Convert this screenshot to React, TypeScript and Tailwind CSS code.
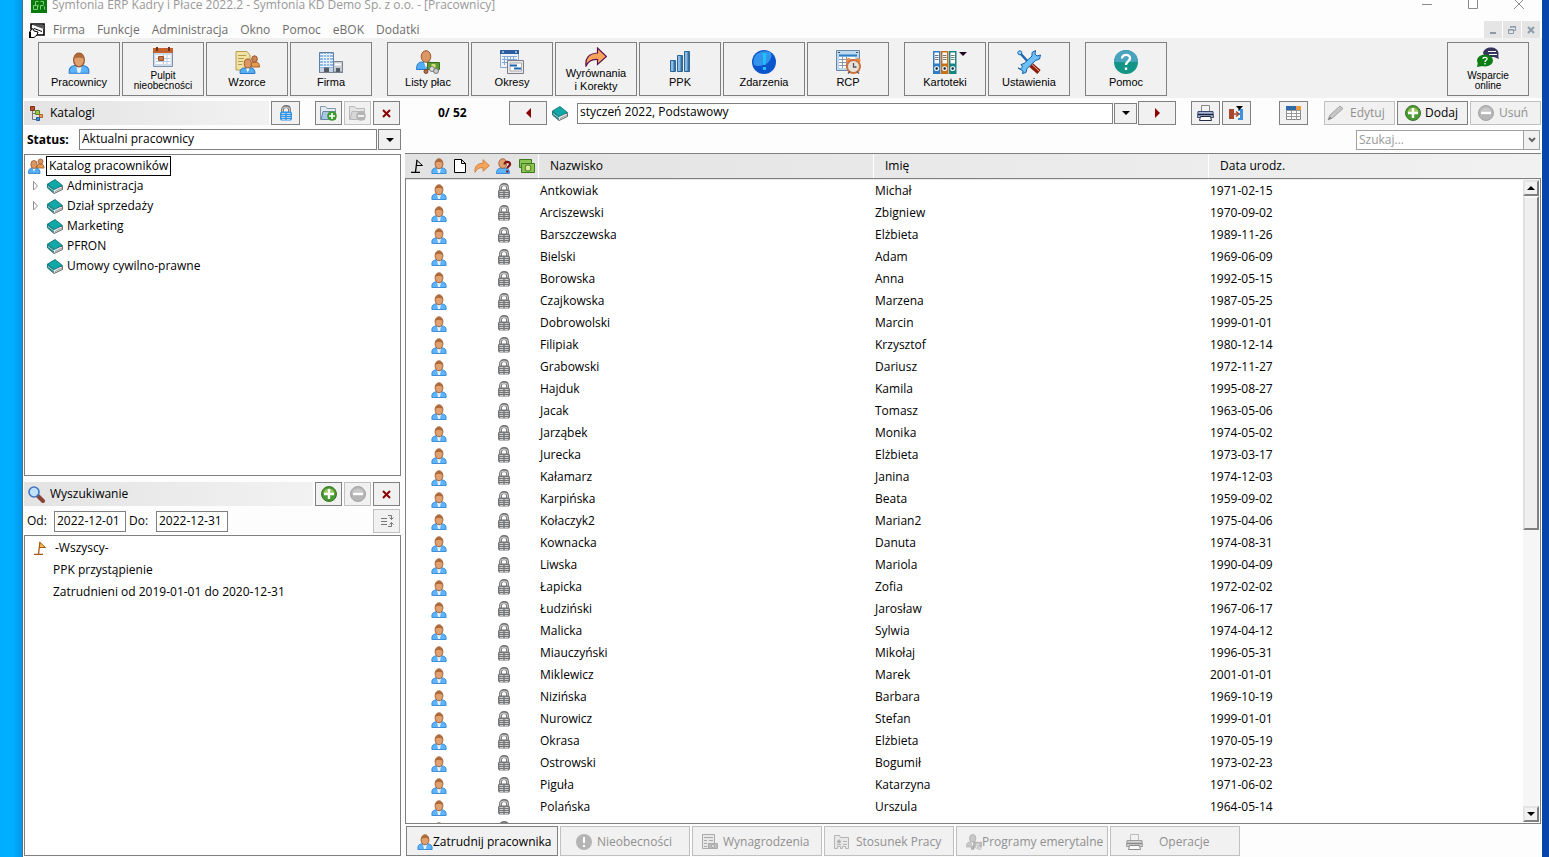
import type { ReactNode } from 'react';

const employees = [
  ['Antkowiak', 'Michał', '1971-02-15'],
  ['Arciszewski', 'Zbigniew', '1970-09-02'],
  ['Barszczewska', 'Elżbieta', '1989-11-26'],
  ['Bielski', 'Adam', '1969-06-09'],
  ['Borowska', 'Anna', '1992-05-15'],
  ['Czajkowska', 'Marzena', '1987-05-25'],
  ['Dobrowolski', 'Marcin', '1999-01-01'],
  ['Filipiak', 'Krzysztof', '1980-12-14'],
  ['Grabowski', 'Dariusz', '1972-11-27'],
  ['Hajduk', 'Kamila', '1995-08-27'],
  ['Jacak', 'Tomasz', '1963-05-06'],
  ['Jarząbek', 'Monika', '1974-05-02'],
  ['Jurecka', 'Elżbieta', '1973-03-17'],
  ['Kałamarz', 'Janina', '1974-12-03'],
  ['Karpińska', 'Beata', '1959-09-02'],
  ['Kołaczyk2', 'Marian2', '1975-04-06'],
  ['Kownacka', 'Danuta', '1974-08-31'],
  ['Liwska', 'Mariola', '1990-04-09'],
  ['Łapicka', 'Zofia', '1972-02-02'],
  ['Łudziński', 'Jarosław', '1967-06-17'],
  ['Malicka', 'Sylwia', '1974-04-12'],
  ['Miauczyński', 'Mikołaj', '1996-05-31'],
  ['Miklewicz', 'Marek', '2001-01-01'],
  ['Nizińska', 'Barbara', '1969-10-19'],
  ['Nurowicz', 'Stefan', '1999-01-01'],
  ['Okrasa', 'Elżbieta', '1970-05-19'],
  ['Ostrowski', 'Bogumił', '1973-02-23'],
  ['Piguła', 'Katarzyna', '1971-06-02'],
  ['Polańska', 'Urszula', '1964-05-14'],
  ['', '', ''],
];

const menu = ['Firma', 'Funkcje', 'Administracja', 'Okno', 'Pomoc', 'eBOK', 'Dodatki'];

const folders = [
  { name: 'Administracja', expandable: true },
  { name: 'Dział sprzedaży', expandable: true },
  { name: 'Marketing', expandable: false },
  { name: 'PFRON', expandable: false },
  { name: 'Umowy cywilno-prawne', expandable: false },
];

export default function App() {
  return (
    <div
      className="flex h-screen overflow-hidden bg-[#0845ab] pr-[7px] text-[12px] leading-4 text-black"
      style={{ fontFamily: '"Segoe UI", "Open Sans", "Noto Sans", sans-serif' }}
    >
      {/* DESKTOP EDGE */}
      <div className="w-[23px] shrink-0 bg-linear-to-r from-[#00aeff] from-60% to-[#0096e6] border-r border-[#4a7386]" />

      <div className="flex min-w-0 flex-1 flex-col bg-[#fdfdfd]">
        <TitleBar />
        <MenuBar />
        <Toolbar />
        <div className="flex min-h-0 flex-1 gap-1 pt-[3px]">
          <Sidebar />
          <main className="flex min-w-0 flex-1 flex-col">
            <PeriodBar />
            <EmployeeTable />
            <ActionBar />
          </main>
        </div>
      </div>
    </div>
  );
}

function TitleBar() {
  return (
    <header className="mb-2.5 flex h-2.5 shrink-0 items-center pl-2 text-[#999]">
      <AppLogo />
      <h1 className="ml-[5px] flex-1 whitespace-nowrap">
        Symfonia ERP Kadry i Płace 2022.2 - Symfonia KD Demo Sp. z o.o. - [Pracownicy]
      </h1>
      <div className="flex gap-[34px] pr-[17px]">
        <button aria-label="Minimalizuj">
          <svg width="12" height="12" stroke="#8a8a8a"><path d="M1 5.500h10" /></svg>
        </button>
        <button aria-label="Maksymalizuj">
          <svg width="12" height="12" fill="none" stroke="#8a8a8a"><path d="M1.500 .500h9v9h-9z" /></svg>
        </button>
        <button aria-label="Zamknij">
          <svg width="12" height="12" stroke="#8a8a8a"><path d="M1 0l10 10M11 0L1 10" /></svg>
        </button>
      </div>
    </header>
  );
}

function MenuBar() {
  return (
    <nav className="flex h-[18px] shrink-0 items-end pl-1.5 pr-0.5 text-[#6d6d6d]">
      <DocumentIcon />
      <div className="ml-2 flex flex-1 gap-3">
        {menu.map((item) => (
          <button key={item}>{item}</button>
        ))}
      </div>
      <div className="flex gap-px">
        <button aria-label="Minimalizuj okno" className="grid h-[17px] w-[18px] place-items-center bg-[#e5e5e5]">
          <svg width="10" height="10" stroke="#8c9baa" strokeWidth="2"><path d="M2 8h6" /></svg>
        </button>
        <button aria-label="Przywróć okno" className="grid h-[17px] w-[18px] place-items-center bg-[#e5e5e5]">
          <svg width="10" height="10" fill="none" stroke="#8c9baa"><path d="M1.500 4.500h5v4h-5zM1 5h6M3.500 3V1.500h5v4H7M3 2h6" /></svg>
        </button>
        <button aria-label="Zamknij okno" className="grid h-[17px] w-[18px] place-items-center bg-[#e5e5e5]">
          <svg width="10" height="10" stroke="#8c9baa" strokeWidth="2"><path d="M2 2l6 6M8 2L2 8" /></svg>
        </button>
      </div>
    </nav>
  );
}

/* TOOLBAR */

function Toolbar() {
  return (
    <div
      className="flex h-[60px] shrink-0 gap-[15px] bg-[#f1f1f1] pt-1 pl-[15px] pr-[13px]"
      style={{ fontFamily: '"Liberation Sans", Arial, sans-serif' }}
    >
      <div className="flex gap-0.5">
        <ToolButton icon={<PersonIcon size={22} />}>Pracownicy</ToolButton>
        <ToolButton icon={<CalendarIcon />} lines="tight">Pulpit<br />nieobecności</ToolButton>
        <ToolButton icon={<TemplatesIcon />}>Wzorce</ToolButton>
        <ToolButton icon={<CompanyIcon />}>Firma</ToolButton>
      </div>
      <div className="flex gap-0.5">
        <ToolButton icon={<PayrollIcon />}>Listy płac</ToolButton>
        <ToolButton icon={<PeriodsIcon />}>Okresy</ToolButton>
        <ToolButton icon={<ArrowIcon width={22} height={20} stroke="#5c1050" />} lines="loose">Wyrównania<br />i Korekty</ToolButton>
        <ToolButton icon={<BarsIcon />}>PPK</ToolButton>
        <ToolButton icon={<EventsIcon />}>Zdarzenia</ToolButton>
        <ToolButton icon={<TimeIcon />}>RCP</ToolButton>
      </div>
      <div className="flex gap-0.5">
        <ToolButton icon={<BindersIcon />}>Kartoteki</ToolButton>
        <ToolButton icon={<ToolsIcon />}>Ustawienia</ToolButton>
      </div>
      <ToolButton icon={<HelpIcon />}>Pomoc</ToolButton>
      <div className="ml-auto flex">
        <ToolButton icon={<SupportIcon />} lines="tight">Wsparcie<br />online</ToolButton>
      </div>
    </div>
  );
}

function ToolButton({
  icon,
  lines = 'single',
  children,
}: {
  icon: ReactNode;
  lines?: 'single' | 'tight' | 'loose';
  children: ReactNode;
}) {
  const labelStyles = {
    single: 'text-[11px] leading-4 mb-[5px]',
    tight: 'text-[10px] leading-[10px] mt-1 mb-1',
    loose: 'text-[11px] leading-[13px] mb-0.5',
  };

  return (
    <button className="flex h-[54px] w-[82px] shrink-0 flex-col items-center justify-end border border-[#808080]">
      {icon}
      <span className={labelStyles[lines]}>{children}</span>
    </button>
  );
}

/* SIDEBAR */

function Sidebar() {
  return (
    <aside className="flex w-[378px] shrink-0 flex-col pl-px">
      <section className="flex h-[375px] flex-col">
        <div className="flex h-6 gap-0.5 pr-px">
          <h2 className="flex flex-1 items-center gap-1.5 bg-linear-to-r from-[#e3e3e3] to-[#f2f2f2] pl-1.5">
            <TreeIcon />
            Katalogi
          </h2>
          <SmallButton label="Zablokuj" wide><LockIcon color="#2f96ea" /></SmallButton>
          <div className="w-[11px]" />
          <SmallButton label="Dodaj katalog"><FolderIcon sign="plus" /></SmallButton>
          <SmallButton label="Usuń katalog" disabled><FolderIcon sign="minus" /></SmallButton>
          <SmallButton label="Zamknij katalogi"><CrossIcon /></SmallButton>
        </div>
        <div className="flex items-center py-1">
          <label htmlFor="status" className="w-[55px] pl-[3px] font-bold">Status:</label>
          <select id="status" className="h-[21px] min-w-0 flex-1 appearance-none border border-[#808080] bg-white px-0.5 pb-0.5">
            <option>Aktualni pracownicy</option>
          </select>
          <DropArrow />
        </div>
        <div className="min-h-0 flex-1 border border-[#808080] bg-white pt-px">
          <div className="flex items-center gap-px pl-[3px]">
            <CrowdIcon />
            <span className="border border-black bg-white px-0.5 leading-[18px]">Katalog pracowników</span>
          </div>
          {folders.map((folder) => (
            <div key={folder.name} className="flex h-5 items-center gap-1 pl-[7px]">
              <svg width="11" height="10" fill="none" stroke="#909090">
                {folder.expandable && <path d="M1.500 .500v8.500L5.500 5z" />}
              </svg>
              <BookIcon />
              <span>{folder.name}</span>
            </div>
          ))}
        </div>
      </section>

      <section className="mt-1.5 flex min-h-0 flex-1 flex-col pb-px">
        <div className="flex h-6 shrink-0 gap-0.5 pr-px">
          <h2 className="flex flex-1 items-center gap-[5px] bg-linear-to-r from-[#e3e3e3] to-[#f2f2f2] pl-1">
            <SearchIcon />
            Wyszukiwanie
          </h2>
          <SmallButton label="Dodaj wyszukiwanie"><SignIcon sign="plus" /></SmallButton>
          <SmallButton label="Usuń wyszukiwanie" disabled><SignIcon sign="minus" /></SmallButton>
          <SmallButton label="Zamknij wyszukiwanie"><CrossIcon /></SmallButton>
        </div>
        <div className="mt-[3px] mb-0.5 flex h-6 shrink-0 items-center pr-px">
          <label htmlFor="from" className="w-[30px] pl-[3px]">Od:</label>
          <input id="from" defaultValue="2022-12-01" className="h-[21px] w-[72px] border border-[#808080] bg-white px-0.5 pb-0.5" />
          <label htmlFor="to" className="w-[30px] pl-[3px]">Do:</label>
          <input id="to" defaultValue="2022-12-31" className="h-[21px] w-[72px] border border-[#808080] bg-white px-0.5 pb-0.5" />
          <div className="ml-auto flex h-6">
            <SmallButton label="Filtruj" disabled>
              <svg width="14" height="14" fill="none" stroke="#777">
                <path d="M1 4.500h6M1 7.500h6M1 10.500h6M8 1.500h3.500v4M9.500 3.500l2 2 2-2M8 12.500h3.500v-4M9.500 10.500l2-2 2 2" />
              </svg>
            </SmallButton>
          </div>
        </div>
        <ul className="min-h-0 flex-1 border border-[#808080] bg-white pt-px">
          <li className="flex h-[22px] items-center gap-2 pl-2"><FlagIcon color="#a85a10" fill="#ffc060" />-Wszyscy-</li>
          <li className="flex h-[22px] items-center pl-7">PPK przystąpienie</li>
          <li className="flex h-[22px] items-center pl-7">Zatrudnieni od 2019-01-01 do 2020-12-31</li>
        </ul>
      </section>
    </aside>
  );
}

function SmallButton({
  label,
  wide = false,
  disabled = false,
  children,
}: {
  label: string;
  wide?: boolean;
  disabled?: boolean;
  children: ReactNode;
}) {
  return (
    <button
      aria-label={label}
      disabled={disabled}
      className={`grid h-6 shrink-0 place-items-center border bg-[#f1f1f1] ${wide ? 'w-[29px]' : 'w-[27px]'} ${
        disabled ? 'border-[#c0c0c0]' : 'border-[#808080]'
      }`}
    >
      {children}
    </button>
  );
}

function DropArrow() {
  return (
    <span className="ml-px grid h-[21px] w-[23px] shrink-0 place-items-center border border-[#808080] bg-[#f1f1f1]">
      <svg width="8" height="4"><path d="M0 0h8L4 4z" /></svg>
    </span>
  );
}

/* PERIOD BAR */

function PeriodBar() {
  return (
    <div>
      <div className="flex h-6 items-center pr-px">
        <span className="w-[104px] pl-[33px] font-bold">0/ 52</span>
        <button aria-label="Poprzedni okres" className="grid h-6 w-[38px] place-items-center border border-[#808080] bg-[#f1f1f1]">
          <svg width="5" height="10" fill="#8b0000"><path d="M5 0v10L0 5z" /></svg>
        </button>
        <span className="mx-[5px]"><BookIcon /></span>
        <select aria-label="Okres" className="ml-1 h-[21px] min-w-0 flex-1 appearance-none border border-[#808080] bg-white px-0.5 pb-0.5">
          <option>styczeń 2022, Podstawowy</option>
        </select>
        <DropArrow />
        <button aria-label="Następny okres" className="ml-px grid h-6 w-[38px] place-items-center border border-[#808080] bg-[#f1f1f1]">
          <svg width="5" height="10" fill="#8b0000"><path d="M0 0v10l5-5z" /></svg>
        </button>
        <div className="ml-[15px] flex gap-0.5">
          <SmallButton label="Drukuj" wide><PrinterIcon /></SmallButton>
          <SmallButton label="Eksport" wide><ExportIcon /></SmallButton>
        </div>
        <div className="ml-7 flex">
          <SmallButton label="Kolumny" wide><GridIcon /></SmallButton>
        </div>
        <div className="ml-4 flex gap-0.5">
          <button disabled className="flex h-6 w-[71px] items-center gap-1.5 border border-[#c0c0c0] bg-[#f1f1f1] pl-0.5 text-[#909090]">
            <PencilIcon />Edytuj
          </button>
          <button className="flex h-6 w-[71px] items-center gap-1 border border-[#808080] bg-[#f1f1f1] pl-[7px]">
            <SignIcon sign="plus" />Dodaj
          </button>
          <button disabled className="flex h-6 w-[71px] items-center gap-[5px] border border-[#c0c0c0] bg-[#f1f1f1] pl-[7px] text-[#909090]">
            <SignIcon sign="minus" />Usuń
          </button>
        </div>
      </div>
      <div className="mt-[5px] mb-[3px] flex h-5 justify-end pr-0.5">
        <input aria-label="Szukaj" placeholder="Szukaj..." className="w-[168px] border border-[#a0a0a0] bg-white px-0.5 placeholder:text-[#999]" />
        <button aria-label="Rozwiń" className="grid w-4 place-items-center border border-l-0 border-[#a0a0a0] bg-[#f1f1f1]">
          <svg width="8" height="6" fill="none" stroke="#666" strokeWidth="2"><path d="M1 1l3 3 3-3" /></svg>
        </button>
      </div>
    </div>
  );
}

/* EMPLOYEE TABLE */

function EmployeeTable() {
  return (
    <div className="relative mr-px min-h-0 flex-1 overflow-hidden border-t border-[#808080] bg-white">
      <table className="w-full table-fixed border-separate border-spacing-0 text-left">
        <colgroup>
          <col className="w-[23px]" />
          <col className="w-[22px]" />
          <col className="w-[20px]" />
          <col className="w-[23px]" />
          <col className="w-[22px]" />
          <col className="w-[23px]" />
          <col className="w-[335px]" />
          <col className="w-[335px]" />
          <col />
        </colgroup>
        <thead className="bg-linear-to-r from-[#e2e2e2] to-[#f1f1f1]">
          <tr className="h-[26px]">
            <HeadIcon label="Znacznik"><FlagIcon color="#000" fill="none" /></HeadIcon>
            <HeadIcon label="Pracownik"><PersonIcon size={16} /></HeadIcon>
            <HeadIcon label="Dokument">
              <svg width="12" height="14" fill="#fff" stroke="#000"><path d="M.500.500h7l4 4v9H.500zM7.500.500v4h4" /></svg>
            </HeadIcon>
            <HeadIcon label="Korekta"><ArrowIcon width={16} height={14} stroke="#c87830" /></HeadIcon>
            <HeadIcon label="Status"><QuestionPersonIcon /></HeadIcon>
            <HeadIcon label="Płace"><MoneyIcon /></HeadIcon>
            <HeadText>Nazwisko</HeadText>
            <HeadText>Imię</HeadText>
            <HeadText>Data urodz.</HeadText>
          </tr>
        </thead>
        <tbody>
          {employees.map(([surname, name, born], i) => (
            <tr key={i} className="h-[22px]">
              <td />
              <td className="p-0"><div className="flex justify-center pt-px"><PersonIcon size={16} /></div></td>
              <td />
              <td />
              <td className="p-0"><div className="flex justify-center"><LockIcon color="#777" /></div></td>
              <td />
              <td className="p-0 pl-0.5">{surname}</td>
              <td className="p-0 pl-0.5">{name}</td>
              <td className="p-0 pl-0.5">{born}</td>
            </tr>
          ))}
        </tbody>
      </table>

      {/* Frame and scroll bar over the rows */}
      <div className="pointer-events-none absolute inset-x-0 top-6 bottom-0 flex justify-end border border-[#808080] p-px">
        <div className="flex w-4 flex-col bg-[#f6f6f6]">
          <ScrollButton><path d="M0 4h8L4 0z" /></ScrollButton>
          <div className="h-[334px] border-2 border-t-[#f8f8f8] border-r-[#808080] border-b-[#808080] border-l-[#e0e0e0] bg-[#efefef]" />
          <div className="flex-1" />
          <ScrollButton><path d="M0 0h8L4 4z" /></ScrollButton>
        </div>
      </div>
    </div>
  );
}

function HeadIcon({ label, children }: { label: string; children: ReactNode }) {
  return (
    <th aria-label={label} className="p-0 pb-0.5">
      <div className="flex justify-center">{children}</div>
    </th>
  );
}

function HeadText({ children }: { children: ReactNode }) {
  return <th className="border-l border-white pb-0.5 pl-[11px] font-normal">{children}</th>;
}

function ScrollButton({ children }: { children: ReactNode }) {
  return (
    <div className="grid h-4 shrink-0 place-items-center border-2 border-t-[#e4e4e4] border-r-[#808080] border-b-[#808080] border-l-[#e4e4e4] bg-[#f1f1f1]">
      <svg width="8" height="4">{children}</svg>
    </div>
  );
}

/* BOTTOM ACTIONS */

function ActionBar() {
  const disabledStyle = 'flex h-[30px] items-center border border-[#c0c0c0] bg-[#f1f1f1] pt-0.5 text-[#909090] whitespace-nowrap';

  return (
    <div className="flex shrink-0 gap-0.5 pt-0.5 pb-px pl-px">
      <button className="flex h-[30px] w-[152px] items-center border border-[#808080] bg-[#f1f1f1] pt-0.5 pl-2.5 whitespace-nowrap">
        <PersonIcon size={16} />Zatrudnij pracownika
      </button>
      <button disabled className={`${disabledStyle} w-[130px] gap-[5px] pl-[15px]`}>
        <svg width="16" height="16"><circle cx="8" cy="8" r="8" fill="#b4b4b4" /><path d="M8 3v6M8 11v2" stroke="#fff" strokeWidth="2" /></svg>
        Nieobecności
      </button>
      <button disabled className={`${disabledStyle} w-[130px] gap-[5px] pl-[9px]`}>
        <svg width="16" height="16" fill="#e8e8e8" stroke="#aaa">
          <path d="M.500.500h12v14H.500zM2 3.500h9M2 6.500h3M7 6.500h4M2 9.500h3M2 12.500h3" />
          <path d="M6.500 9.500h9v5h-9z" fill="#bbb" /><circle cx="11" cy="12" r="1.500" fill="#eee" />
        </svg>
        Wynagrodzenia
      </button>
      <button disabled className={`${disabledStyle} w-[130px] gap-1.5 pl-[9px]`}>
        <svg width="16" height="16" fill="#e8e8e8" stroke="#b4b4b4">
          <path d="M.500 14.500v-13h5l1 2h8v11h-3v-2h-3v2h-2v-2h-3v2z" />
          <path d="M9 7.500h4M9 10.500h4M3 10.500h4" /><circle cx="5" cy="7.500" r="1.500" fill="#aaa" />
        </svg>
        Stosunek Pracy
      </button>
      <button disabled className={`${disabledStyle} w-[152px] pl-[9px]`}>
        <span className="grayscale opacity-50"><PayrollIcon size={16} /></span>
        Programy emerytalne
      </button>
      <button disabled className={`${disabledStyle} w-[130px] gap-4 pl-[15px]`}>
        <span className="grayscale opacity-50"><PrinterIcon /></span>
        Operacje
      </button>
    </div>
  );
}

/* ICONS */

function AppLogo() {
  return (
    <svg width="16" height="16" className="shrink-0">
      <path d="M0 0h16v16H0z" fill="#087a0c" />
      <path d="M2.500 12.500V8.500h4v4zM4.500 8V4.500h3M9.500 4.500h3v3M9.500 12.500v-4h3M13.500 12.500v-3" fill="none" stroke="#7fcf7c" />
      <path d="M2 2.500h3M11 2.500h3M7.500 7v3" stroke="#3aa53c" />
    </svg>
  );
}

function DocumentIcon() {
  return (
    <svg width="16" height="15" className="shrink-0">
      <path d="M2 1h13v11H8L2 6z" fill="#fff" stroke="#000" strokeWidth="1.600" />
      <path d="M4 2h11v4L9 4z" fill="#555" />
      <path d="M5 5.500l8 3" stroke="#000" />
      <path d="M1 14.500V8l3-2.500 1 2.500 4 1-1 3-3 2.500z" fill="#fff" stroke="#000" />
      <path d="M0 9h2v6H0z" />
    </svg>
  );
}

function PersonIcon({ size }: { size: number }) {
  return (
    <svg width={size} height={size} viewBox="0 0 16 16" className="shrink-0">
      <path d="M.900 15.500v-2.300c.300-2 1.600-3 4-3.400h6.200c2.400.400 3.700 1.400 4 3.400v2.300z" fill="#5cb4fa" stroke="#2b7cd0" strokeWidth=".8" />
      <path d="M6 10l1 5h2l1-5z" fill="#e8f4ff" />
      <ellipse cx="8" cy="5.800" rx="3.900" ry="5" fill="#e0a070" stroke="#97552c" strokeWidth=".9" />
      <path d="M4.300 5C4.300 2 6 1 8 1s3.700 1 3.700 4C10.500 3.800 5.500 3.800 4.300 5z" fill="#b06a38" />
    </svg>
  );
}

function CrowdIcon() {
  return (
    <svg width="17" height="16" viewBox="0 0 17 16" className="shrink-0">
      <path d="M9 10c0-3 1-4 3.500-4s3.500 1 3.500 4z" fill="#e59a4c" stroke="#a3602a" strokeWidth=".8" />
      <circle cx="12.500" cy="3.500" r="2.500" fill="#d99362" stroke="#97552c" strokeWidth=".8" />
      <path d="M.500 15.500c0-4 1-5 3-5.500h5c2.500.500 3.500 2 3.500 5.500z" fill="#52adf5" stroke="#2b78c8" strokeWidth=".8" />
      <path d="M4.500 10L6 14l1.500-4z" fill="#fff" />
      <ellipse cx="6" cy="6.500" rx="3.200" ry="4" fill="#dc9662" stroke="#97552c" strokeWidth=".8" />
    </svg>
  );
}

function QuestionPersonIcon() {
  return (
    <svg width="16" height="16" viewBox="0 0 16 16">
      <path d="M.500 15.500c0-3.500 1-5 4-5.500h5c3 .500 4 2 4 5.500z" fill="#5cb4fa" stroke="#2b7cd0" strokeWidth=".8" />
      <ellipse cx="6.800" cy="5.500" rx="4" ry="4.800" fill="#e0a070" stroke="#97552c" strokeWidth=".8" />
      <path d="M8.500 6.500c0-4 6-3 5.500 0-.300 1.800-2.500 1.800-2.700 4M11.300 12.500v2" fill="none" stroke="#7c1010" strokeWidth="2.200" />
    </svg>
  );
}

function CalendarIcon() {
  return (
    <svg width="20" height="20" viewBox="0 0 20 20">
      <path d="M.500 2h19v17.500H.500z" fill="#cfdcec" stroke="#7f93ad" />
      <path d="M0 1h20v5H0z" fill="#c2622e" />
      <path d="M4 0v4M16 0v4" stroke="#6e3114" strokeWidth="2" />
      <path d="M2.500 8h15v9h-15z" fill="#fff" />
      <path d="M3 11.500h14M3 14.500h14M10.500 8v9M14 8v9" stroke="#b9c8da" />
      <path d="M5.500 9.500h5v4h-5z" fill="#c87547" stroke="#9c4f24" />
    </svg>
  );
}

function TemplatesIcon() {
  return (
    <svg width="25" height="24" viewBox="0 0 25 24">
      <path d="M1 1.500h11l3 3.500v15H1z" fill="#f3e3a2" stroke="#b59c58" />
      <path d="M3 5.500h8M3 8.500h6M3 11.500h5M3 14.500h4" stroke="#b59c58" />
      <path d="M16 17c0-4 1-5 4-5s4.500 1 4.500 5z" fill="#e59a4c" stroke="#a3602a" />
      <ellipse cx="19.500" cy="9" rx="2.800" ry="3.200" fill="#cf8450" stroke="#97552c" />
      <path d="M5 23.500c0-4 1-5 4-5.500h7c3 .500 4 2 4 5.500z" fill="#52adf5" stroke="#2b78c8" />
      <path d="M11 18l1.800 4.500L14.500 18z" fill="#fff" />
      <ellipse cx="12.800" cy="13.500" rx="3.600" ry="4.500" fill="#dc9662" stroke="#97552c" />
    </svg>
  );
}

function CompanyIcon() {
  return (
    <svg width="24" height="22" viewBox="0 0 24 22">
      <path d="M14 9.500h9.500V20H14z" fill="#c9ccd4" stroke="#7d828f" />
      <path d="M16 12.500h6" stroke="#fff" strokeWidth="2" />
      <path d="M.500 .500h14V20H.500z" fill="#6fa3dc" stroke="#5f7fa6" />
      <path d="M1 2.500h13M1 5.500h13M1 8.500h13M1 11.500h13M1 14.500h13" stroke="#f2f7fd" strokeWidth="1.600" />
      <path d="M4.500 1v14M7.500 1v14M10.500 1v14" stroke="#dfeaf7" />
      <path d="M1 16h13v4H1z" fill="#c9d4e2" />
      <path d="M5 15.500h5V20H5zM17 16h4v4h-4z" fill="#555b66" />
      <path d="M0 20.500h24" stroke="#7d828f" />
    </svg>
  );
}

function PayrollIcon({ size = 24 }: { size?: number }) {
  return (
    <svg width={size} height={size} viewBox="0 0 24 24">
      <path d="M.500 19.500c0-5 1.500-7 5-7.500h8c3 .500 4 3 4 7.500z" fill="#52adf5" stroke="#2b78c8" />
      <path d="M8 12l2 6 2-6z" fill="#fff" />
      <ellipse cx="10" cy="6.500" rx="4.800" ry="5.800" fill="#dc9662" stroke="#97552c" />
      <path d="M11.500 12.500h12v7h-12z" fill="#5d9a34" stroke="#3d6e1c" />
      <circle cx="17.500" cy="16" r="2.300" fill="#d8e078" />
      <circle cx="10" cy="21.500" r="2" fill="#b86f48" stroke="#7c4324" />
      <circle cx="16" cy="19" r="2.500" fill="#ddd" stroke="#777" />
      <circle cx="20" cy="21" r="2.500" fill="#ccc" stroke="#777" />
    </svg>
  );
}

function PeriodsIcon() {
  return (
    <svg width="24" height="24" viewBox="0 0 24 24">
      <path d="M.500.500h18v17H.500z" fill="#eef3fa" stroke="#8ea6c8" />
      <path d="M0 0h19v4H0z" fill="#2c5c9e" />
      <path d="M3 1v2M16 1v2" stroke="#fff" />
      <path d="M2 6.500h15M2 9.500h15M2 12.500h15M4.500 6v9M7.500 6v9M10.500 6v9M13.500 6v9" stroke="#86a8d6" />
      <path d="M7.500 10.500h16v13h-16z" fill="#e9e9ec" stroke="#7c7c84" />
      <path d="M10 13h11.500v8H10z" fill="#fff" stroke="#aaa" />
      <path d="M10 15.500h7M14 18.500h7" stroke="#1d66b4" strokeWidth="2" />
    </svg>
  );
}

function ArrowIcon({ width, height, stroke }: { width: number; height: number; stroke: string }) {
  return (
    <svg width={width} height={height} viewBox="0 0 22 20" className="shrink-0">
      <path d="M1 19C0 11 4 6.500 12.500 6V1l9 8.500-9 8v-5C7 12 3.500 14 1 19z" fill="#f6a45c" stroke={stroke} strokeWidth="1.200" />
    </svg>
  );
}

function BarsIcon() {
  return (
    <svg width="20" height="24" viewBox="0 0 20 24" fill="#8dbbe6" stroke="#2a6597">
      <path d="M.500 10.500h5v11h-5zM7.500 5.500h5v16h-5zM14.500 1.500h5v20h-5z" />
      <path d="M4.500 11v10M11.500 6v15M18.500 2v19" stroke="#34719f" strokeWidth="2" />
    </svg>
  );
}

function EventsIcon() {
  return (
    <svg width="24" height="24" viewBox="0 0 24 24">
      <circle cx="12" cy="12" r="12" fill="#0a55cc" />
      <path d="M2 15C-1 5 9-1 18 2c3 3 1 9-4 12-5 2-9 3-12 1z" fill="#3493ea" />
      <path d="M10.500 3h4l-1 12h-2zM11 17h3v3h-3z" fill="#1fc0ff" />
    </svg>
  );
}

function TimeIcon() {
  return (
    <svg width="25" height="24" viewBox="0 0 25 24">
      <path d="M.500.500h23v20H.500z" fill="#bcd9ee" stroke="#6788a8" />
      <path d="M2 2.500h2M20 2.500h2" stroke="#456" />
      <path d="M3 5.500h18" stroke="#2c7cc0" strokeWidth="2" />
      <path d="M3 7h16v11H3z" fill="#fff" />
      <path d="M3 9.500h16M3 12.500h16M3 15.500h16M6.500 7v11M10.500 7v11" stroke="#8d99a6" />
      <circle cx="12.500" cy="10.500" r="2.500" fill="#e88b4b" /><circle cx="22" cy="10.500" r="2.500" fill="#e88b4b" />
      <circle cx="17.500" cy="16.500" r="6.500" fill="#e6e2dc" stroke="#d2713a" strokeWidth="2" />
      <path d="M17.500 13v4h3M12 23.500l2-2M23 23.500l-2-2" fill="none" stroke="#555" strokeWidth="1.300" />
    </svg>
  );
}

function BindersIcon() {
  const colors = ['#2f7dc4', '#c87018', '#1a8484'];
  return (
    <svg width="24" height="24" viewBox="0 0 24 24" className="overflow-visible">
      {colors.map((color, i) => (
        <g key={color} transform={`translate(${i * 8} 0)`}>
          <path d="M0 1h7.500v23H0z" fill={color} />
          <path d="M1.500 2.500h4.500v11H1.500z" fill="#fff" />
          <path d="M2 5.500h3.500M2 7.500h3.500M2 9.500h3.500" stroke="#777" />
          <circle cx="3.700" cy="18.500" r="2.600" fill="#e4eef4" />
          <circle cx="3.700" cy="18.500" r="1.200" fill="#123" />
        </g>
      ))}
      <path d="M26 2h8l-4 4z" fill="#200020" />
    </svg>
  );
}

function ToolsIcon() {
  return (
    <svg width="24" height="24" viewBox="0 0 24 24">
      <path d="M3 3l10 11" stroke="#1d66b4" strokeWidth="2.500" />
      <circle cx="2.800" cy="2.800" r="2" fill="#8fd0f8" stroke="#1d66b4" />
      <path d="M14 15l8 7" stroke="#8b1d0c" strokeWidth="5" />
      <path d="M15 14.500l7 6.500" stroke="#f0b8a4" />
      <path d="M1 18l2.500 1 2-2-1.500-2.500 3-1 8-7.500V2.500L18.500.500 18 4l2 2 3.500-1-1 4-4 1.500-8.500 8-1 4L5.500 23.500 6 21z" fill="#6cc0f5" stroke="#1a5ea8" />
    </svg>
  );
}

function HelpIcon() {
  return (
    <svg width="24" height="24" viewBox="0 0 24 24">
      <circle cx="12" cy="12" r="12" fill="#139484" />
      <path d="M0 12a12 12 0 0124 0z" fill="#4aa3bd" />
      <path d="M8 8.500c0-5 8.500-4.500 8 0-.300 3-4 2.800-4 6.500M12 17.500v2.500" fill="none" stroke="#fff" strokeWidth="2.300" />
    </svg>
  );
}

function SupportIcon() {
  return (
    <svg width="24" height="20" viewBox="0 0 24 20">
      <path d="M7 6C8-1.500 22-1.500 22.500 6c0 2-.500 3 .500 6l-5-2H9z" fill="#34345c" />
      <path d="M12 4.500h8M13 7.500h8" stroke="#fff" />
      <ellipse cx="9" cy="13.500" rx="8" ry="6" fill="#0a7d14" />
      <path d="M2 15l-1 5 6-1z" fill="#0a7d14" />
      <path d="M7 12c0-2.500 4.500-2 4 0-.300 1.300-2 1.200-2 3M9 16v1.500" fill="none" stroke="#fff" strokeWidth="1.300" />
    </svg>
  );
}

function TreeIcon() {
  return (
    <svg width="14" height="15" className="shrink-0">
      <path d="M2.500 5v8.500H9M2.500 7.500H6" fill="none" stroke="#777" />
      <path d="M.500.500h4v4h-4z" fill="#b5502c" stroke="#7c3010" />
      <path d="M5.500 4.500h4v4h-4z" fill="#9bc848" stroke="#5a8420" />
      <path d="M9.500 8.500h3v3h-3z" fill="#f2a04c" stroke="#b5602c" />
      <path d="M6.500 11.500h3v3h-3z" fill="#3d92dc" stroke="#1d5ca0" />
    </svg>
  );
}

function LockIcon({ color }: { color: string }) {
  return (
    <svg width="12" height="16" viewBox="0 0 12 16">
      <path d="M2.500 8V4.500C2.500.500 9.500.500 9.500 4.500V8" fill="none" stroke="#6c6c6c" strokeWidth="2.800" />
      <path d="M2.500 8V4.500c0-3.200 7-3.200 7 0V8" fill="none" stroke="#c4c4c4" strokeWidth="1.200" />
      <path d="M0 8l1-1.500h10L12 8v6l-1 1.500H1L0 14z" fill={color} />
      <path d="M1.500 8.500h9M1.500 10.500h9M1.500 12.500h9M2 14.500h8" stroke="#d2d8dc" strokeWidth=".9" />
      <path d="M6 7v8" stroke={color} strokeWidth="1.500" />
    </svg>
  );
}

function FolderIcon({ sign }: { sign: 'plus' | 'minus' }) {
  const active = sign === 'plus';
  return (
    <svg width="17" height="16" viewBox="0 0 17 16">
      <path d="M.500 14.500v-13h5l1.500 2h8.500v11z" fill={active ? '#e2ebf2' : '#e4e4e4'} stroke={active ? '#8199ac' : '#b8b8b8'} />
      <path d="M1 14.500l2-8h12.500v8z" fill={active ? '#a4c8e6' : '#d6d6d6'} stroke={active ? '#6686a2' : '#b8b8b8'} />
      <circle cx="12" cy="11" r="4.800" fill={active ? '#3f9a2c' : '#b4b4b4'} />
      <path d={active ? 'M12 8v6M9 11h6' : 'M9 11h6'} stroke="#fff" strokeWidth="1.600" />
    </svg>
  );
}

function SignIcon({ sign }: { sign: 'plus' | 'minus' }) {
  const active = sign === 'plus';
  return (
    <svg width="16" height="16" className="shrink-0">
      <circle cx="8" cy="8" r="7.500" fill={active ? '#4a9a34' : '#b6b6b6'} stroke={active ? '#3a7426' : '#a4a4a4'} />
      <path d="M2.500 8a5.500 5.500 0 0111 0z" fill={active ? '#9cc45e' : '#c8c8c8'} />
      <path d={active ? 'M8 3v10M3 8h10' : 'M3 8h10'} stroke="#fff" strokeWidth="2.400" />
    </svg>
  );
}

function CrossIcon() {
  return (
    <svg width="9" height="9" stroke="#8b0000" strokeWidth="2"><path d="M1 1l7 7M8 1L1 8" /></svg>
  );
}

function BookIcon() {
  return (
    <svg width="16" height="15" className="shrink-0">
      <path d="M.500 5.500V9L7 14.500l8.500-4V7.500z" fill="#ececec" stroke="#555" strokeWidth=".9" />
      <path d="M8 12.500l7-3.500" fill="none" stroke="#999" />
      <path d="M.500 5L8 .500l7.500 6L7 10.500z" fill="#12a8a8" stroke="#0b6a70" strokeWidth=".8" />
      <path d="M0 5l7 5.500v3.500L0 8.500z" fill="#0d8286" />
      <path d="M1 7.500l6 4.500" stroke="#d8e8e8" strokeWidth=".8" />
    </svg>
  );
}

function SearchIcon() {
  return (
    <svg width="17" height="17" className="shrink-0">
      <path d="M9.500 9.500l5.500 5.500" stroke="#8a4436" strokeWidth="4" strokeLinecap="round" />
      <circle cx="6" cy="6" r="5" fill="#bfe2fb" stroke="#4076c0" strokeWidth="1.600" />
    </svg>
  );
}

function FlagIcon({ color, fill }: { color: string; fill: string }) {
  return (
    <svg width="14" height="14" fill="none" stroke={color} className="shrink-0">
      <path d="M6.500 1l6 5.500H6" fill={fill} />
      <path d="M7 1L5.500 13M1 13.500h9" strokeWidth="1.300" />
    </svg>
  );
}

function PrinterIcon() {
  return (
    <svg width="17" height="16" viewBox="0 0 17 16">
      <path d="M4.500.500h8V7h-8z" fill="#f4f4f4" stroke="#888" />
      <path d="M1 6.500h15l.500 6H.500z" fill="#a9b8d8" stroke="#3c4a70" />
      <path d="M1 9.500h15" stroke="#1c2444" strokeWidth="1.500" />
      <path d="M3.500 11.500h10l1 4h-12z" fill="#fff" stroke="#222a48" />
    </svg>
  );
}

function ExportIcon() {
  return (
    <svg width="15" height="15">
      <path d="M0 3h5v10H0z" fill="#a8482c" />
      <path d="M5 8h4M7 5.500L10 8l-3 2.500" stroke="#a8482c" fill="none" strokeWidth="1.500" />
      <path d="M9 3h5v11H9V12h2V9h-1V7h1V5H9z" fill="#3d92dc" />
      <path d="M7 0h7l-3.500 4z" />
    </svg>
  );
}

function GridIcon() {
  return (
    <svg width="15" height="14">
      <path d="M.500.500h14v13H.500z" fill="#fff" stroke="#888" />
      <path d="M0 0h10v4H0z" fill="#2c6ba8" /><path d="M10 0h5v4h-5z" fill="#ee983c" />
      <path d="M0 4.500h15M0 7.500h15M0 10.500h15M5.500 4v10M10.500 4v10" stroke="#999" />
    </svg>
  );
}

function PencilIcon() {
  return (
    <svg width="17" height="16" className="shrink-0">
      <path d="M1 15l2-5 10-9 3 2.500-10 9z" fill="#c6c6c6" stroke="#a4a4a4" />
      <path d="M1 15l1.500-3.500L5 13.500z" fill="#888" />
    </svg>
  );
}

function MoneyIcon() {
  return (
    <svg width="16" height="14">
      <path d="M.500.500h12v8H.500z" fill="#8cc452" stroke="#3d7a20" />
      <path d="M2.500 4.500h13v9h-13z" fill="#8cc452" stroke="#3d7a20" />
      <ellipse cx="9" cy="9" rx="3" ry="3.200" fill="#dbe890" stroke="#3d7a20" />
    </svg>
  );
}
